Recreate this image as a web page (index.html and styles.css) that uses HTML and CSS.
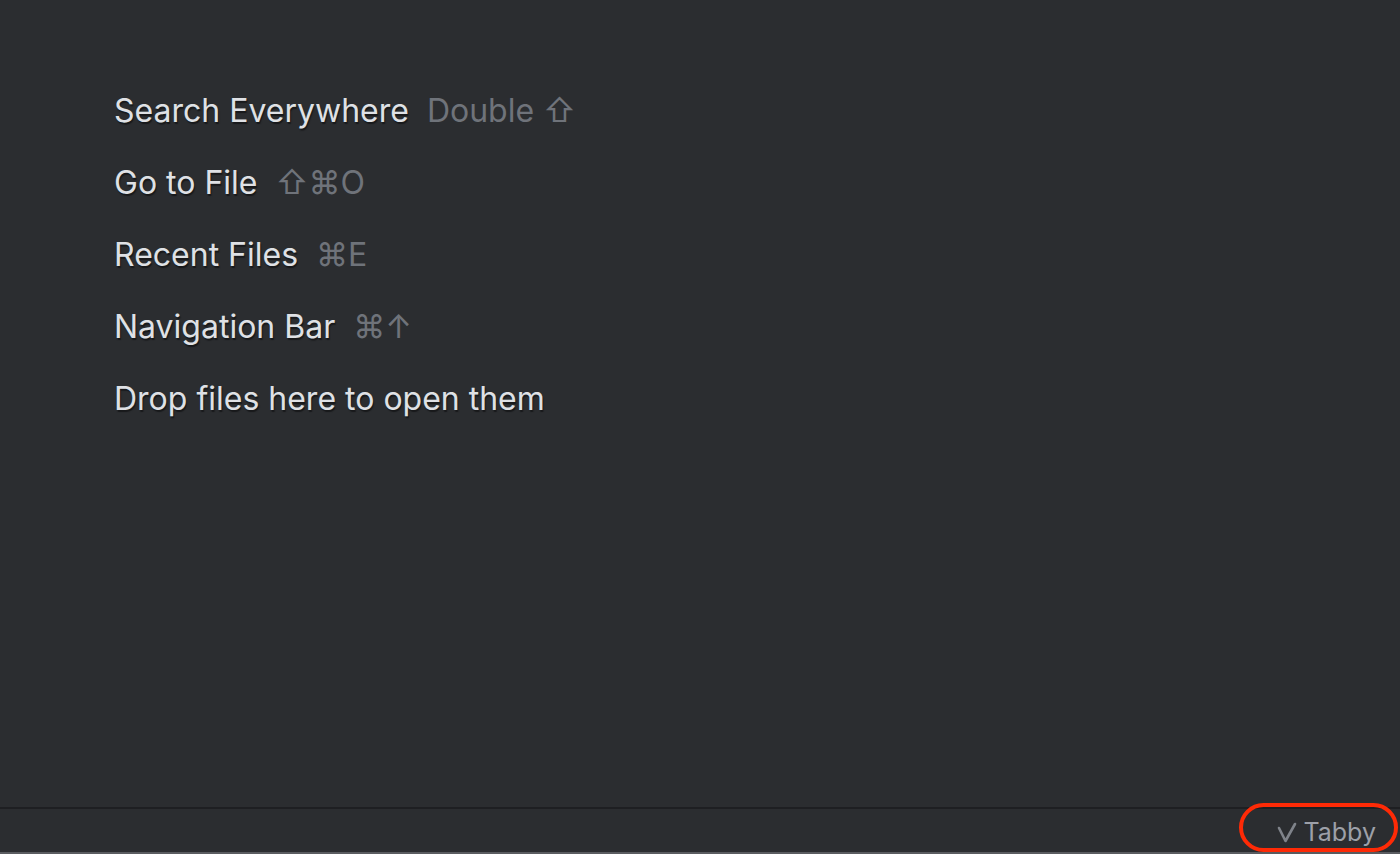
FILE: index.html
```html
<!DOCTYPE html>
<html>
<head>
<meta charset="utf-8">
<link rel="stylesheet" href="styles.css">
</head>
<body>
<div class="app">
  <main class="editor">
    <ul class="hints">
      <li class="hint"><span class="label">Search Everywhere</span><span class="keys">Double ⇧</span></li>
      <li class="hint"><span class="label">Go to File</span><span class="keys">⇧⌘O</span></li>
      <li class="hint"><span class="label">Recent Files</span><span class="keys">⌘E</span></li>
      <li class="hint"><span class="label">Navigation Bar</span><span class="keys">⌘↑</span></li>
      <li class="hint"><span class="label">Drop files here to open them</span></li>
    </ul>
  </main>
  <footer class="status">
    <div class="widget">
      <svg class="check" width="20" height="22" viewBox="0 0 20 22"><polyline points="2,6 8.5,19 18,2" fill="none" stroke="#7f838a" stroke-width="2.6" stroke-linecap="round" stroke-linejoin="round"/></svg><span class="name">Tabby</span>
    </div>
  </footer>
  <div class="edge"></div>
</div>
</body>
</html>
```
FILE: styles.css
```css
* { box-sizing: border-box; }
html, body { margin: 0; padding: 0; }
body {
  background: #2b2d30;
  font-family: Inter, "Noto Sans", sans-serif;
  width: 1400px;
  height: 854px;
  overflow: hidden;
}
.app {
  display: flex;
  flex-direction: column;
  height: 854px;
}
.editor {
  flex: 1;
  background: #2b2d30;
  padding: 81px 0 0 114px;
}
.hints {
  list-style: none;
  margin: 0;
  padding: 0;
  display: flex;
  flex-direction: column;
}
.hint {
  height: 72px;
  display: flex;
  align-items: baseline;
  font-size: 32px;
  line-height: 60px;
}
.label {
  color: #dfe1e5;
  text-shadow: 1px 2px 1px #18191b;
}
.keys {
  color: #6f737a;
  margin-left: 18px;
}
.status {
  height: 45px;
  border-top: 2px solid #1e1f22;
  background: #2b2d30;
  display: flex;
  justify-content: flex-end;
  align-items: stretch;
}
.widget {
  display: flex;
  align-items: center;
  padding: 2px 24px 0 0;
  color: #9da0a8;
  font-size: 25px;
  position: relative;
}
.widget::after {
  content: "";
  position: absolute;
  left: -38px;
  right: 2px;
  top: -6px;
  bottom: 0;
  border: 4px solid #fe2a06;
  border-radius: 25px;
}
.check {
  display: block;
  margin-right: 6px;
  margin-top: 2px;
}
.edge {
  height: 2px;
  background: #5a5c60;
}
```
